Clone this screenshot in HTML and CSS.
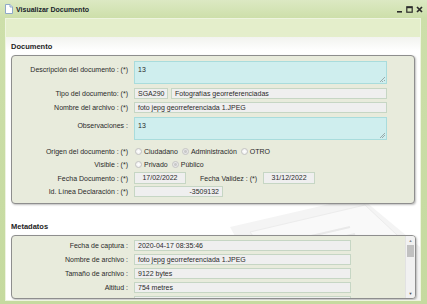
FILE: index.html
```html
<!DOCTYPE html>
<html lang="es">
<head>
    <meta charset="UTF-8">
    <meta name="viewport" content="width=device-width, initial-scale=1.0">
    <title>Visualizar Documento</title>

    <link rel="stylesheet" href="styles.css">
</head>
<body>

    <div class="window">
        <!-- Title bar -->
        <div class="titlebar">
            <svg class="doc-icon" width="8" height="10" viewBox="0 0 8 10">
                <path d="M0.5 0.5 H5 L7.5 3 V9.5 H0.5 Z" fill="#fff" stroke="#8fa9c8"/>
                <path d="M5 0.5 V3 H7.5" fill="#dfe8f3" stroke="#8fa9c8"/>
            </svg>
            <span class="title">Visualizar Documento</span>
            <div class="tools">
                <svg width="7" height="7" viewBox="0 0 7 7"><rect x="1" y="5" width="5" height="1.6" fill="#2b2b2b"/></svg>
                <svg width="7" height="7" viewBox="0 0 7 7"><rect x="0.8" y="0.8" width="5.4" height="5.4" fill="none" stroke="#2b2b2b" stroke-width="1.2"/><rect x="0.8" y="0.8" width="5.4" height="1.4" fill="#2b2b2b"/></svg>
                <svg width="7" height="7" viewBox="0 0 7 7"><path d="M1 1 L6 6 M6 1 L1 6" stroke="#2b2b2b" stroke-width="1.7"/></svg>
            </div>
        </div>

        <div class="frame">
            <div class="toolbar"></div>

            <div class="content">
                <!-- faint background picture -->
                <svg class="watermark" width="230" height="130" viewBox="0 0 230 130">
                    <path d="M40 40 L170 10 L230 60 L230 130 L90 130 Z" fill="#f4f4f4"/>
                    <path d="M60 45 L175 18 L222 62 L110 112 Z" fill="#f9f9f9" stroke="#ececec"/>
                    <path d="M95 55 L160 40 M100 62 L165 47 M105 69 L170 54 M110 76 L175 61" stroke="#e9e9e9" stroke-width="2"/>
                </svg>

                <h3 class="section-title">Documento</h3>
                <div class="fieldset doc">
                    <div class="row">
                        <label class="label top">Descripción del documento : (*)</label>
                        <div class="textarea">13<span class="grip"></span></div>
                    </div>
                    <div class="row gap-4">
                        <label class="label">Tipo del documento: (*)</label>
                        <div class="input code">SGA290</div>
                        <div class="input type-name">Fotografías georreferenciadas</div>
                    </div>
                    <div class="row gap-3">
                        <label class="label">Nombre del archivo : (*)</label>
                        <div class="input wide">foto jepg georreferenciada 1.JPEG</div>
                    </div>
                    <div class="row gap-4">
                        <label class="label top">Observaciones :</label>
                        <div class="textarea">13<span class="grip"></span></div>
                    </div>
                    <div class="row gap-6">
                        <label class="label">Origen del documento : (*)</label>
                        <span class="radio"></span><span class="radio-text">Ciudadano</span>
                        <span class="radio checked"></span><span class="radio-text">Administración</span>
                        <span class="radio"></span><span class="radio-text">OTRO</span>
                    </div>
                    <div class="row gap-2">
                        <label class="label">Visible : (*)</label>
                        <span class="radio"></span><span class="radio-text">Privado</span>
                        <span class="radio checked"></span><span class="radio-text">Público</span>
                    </div>
                    <div class="row gap-2">
                        <label class="label">Fecha Documento : (*)</label>
                        <div class="input date">17/02/2022</div>
                        <label class="label inline">Fecha Validez : (*)</label>
                        <div class="input date">31/12/2022</div>
                    </div>
                    <div class="row gap-2">
                        <label class="label">Id. Línea Declaración : (*)</label>
                        <div class="input line-id">-3509132</div>
                    </div>
                </div>

                <h3 class="section-title meta-title">Metadatos</h3>
                <div class="fieldset meta">
                    <div class="meta-rows">
                        <div class="row">
                            <label class="label">Fecha de captura :</label>
                            <div class="input meta-value">2020-04-17 08:35:46</div>
                        </div>
                        <div class="row">
                            <label class="label">Nombre de archivo :</label>
                            <div class="input meta-value">foto jepg georreferenciada 1.JPEG</div>
                        </div>
                        <div class="row">
                            <label class="label">Tamaño de archivo :</label>
                            <div class="input meta-value">9122 bytes</div>
                        </div>
                        <div class="row">
                            <label class="label">Altitud :</label>
                            <div class="input meta-value">754 metres</div>
                        </div>
                        <div class="row">
                            <label class="label"></label>
                            <div class="input meta-value"></div>
                        </div>
                    </div>
                    <div class="scrollbar">
                        <span class="arrow">&#9650;</span>
                        <span class="thumb"></span>
                        <span class="arrow down">&#9660;</span>
                    </div>
                </div>
            </div>
        </div>
    </div>

</body>
</html>
```

FILE: styles.css
```css
* {
    margin: 0;
    padding: 0;
    box-sizing: border-box;
    font-family: 'Liberation Sans', Arial, sans-serif;
}
body {
    width: 427px;
    height: 304px;
    overflow: hidden;
    background: #c6da9f;
}
.window {
    height: 304px;
    display: flex;
    flex-direction: column;
    background: linear-gradient(#dce9c3, #cddfaa 18px, #c5da9f);
}
.titlebar {
    height: 18px;
    display: flex;
    align-items: center;
    padding: 0 4px 0 5px;
}
.title {
    margin-left: 3px;
    font-size: 7px;
    font-weight: bold;
    color: #17232c;
}
.tools {
    margin-left: auto;
    display: flex;
    gap: 3px;
}
.frame {
    flex: 1;
    margin: 0 6px 3px 5px;
    border: 1px solid #eef4df;
    display: flex;
    flex-direction: column;
    background: #fff;
    overflow: hidden;
}
.toolbar {
    height: 18px;
    background: #e4eecb;
}
.content {
    flex: 1;
    position: relative;
    padding: 5px 4px 0 5px;
    background: linear-gradient(#f2f3ef, #fff 14px);
}
.watermark {
    position: absolute;
    right: 0;
    top: 150px;
}
.section-title {
    position: relative;
    height: 9px;
    margin-bottom: 4px;
    font-size: 7.5px;
    line-height: 9px;
    font-weight: bold;
    color: #1d1d1d;
}
.meta-title {
    margin-top: 18px;
}
.fieldset {
    position: relative;
    background: #e8ebdc;
    border: 1px solid #8e8e8e;
    border-radius: 4px;
    box-shadow: 1px 1px 2px rgba(0, 0, 0, 0.25);
}
.doc {
    margin-right: 1px;
    padding: 5px 0 6px 0;
}
.row {
    display: flex;
    align-items: center;
    font-size: 7px;
    line-height: 11px;
    color: #2a2a2a;
}
.gap-2 { margin-top: 2px; }
.gap-3 { margin-top: 3px; }
.gap-4 { margin-top: 4px; }
.gap-6 { margin-top: 6px; }
.label {
    width: 116px;
    margin-right: 6px;
    text-align: right;
    white-space: nowrap;
}
.label.top {
    align-self: flex-start;
    padding-top: 3px;
}
.label.inline {
    width: auto;
    margin: 0 6px 0 14px;
}
.textarea {
    position: relative;
    width: 253px;
    height: 23px;
    padding: 2px 3px;
    background: #cfeeee;
    border: 1px solid #a9dcdc;
}
.grip {
    position: absolute;
    right: 1px;
    bottom: 1px;
    width: 5px;
    height: 5px;
    background: linear-gradient(135deg, transparent 45%, #9aa 45%, #9aa 55%, transparent 55%, transparent 70%, #9aa 70%, #9aa 80%, transparent 80%);
}
.input {
    height: 11px;
    padding: 0 3px;
    background: #efefef;
    border: 1px solid #c6d6c4;
    white-space: nowrap;
    overflow: hidden;
    line-height: 9px;
}
.code {
    width: 34px;
    text-align: right;
    margin-right: 3px;
}
.type-name {
    width: 216px;
}
.wide {
    width: 253px;
}
.date {
    width: 52px;
    height: 12px;
    line-height: 10px;
    text-align: center;
}
.line-id {
    width: 89px;
    text-align: right;
}
.radio {
    width: 7px;
    height: 7px;
    margin: 0 2px 0 1px;
    border: 1px solid #c4c4c4;
    border-radius: 50%;
    background: radial-gradient(#ffffff, #eaeaea);
}
.radio.checked {
    background: radial-gradient(#c9c9c9 35%, #e4e4e4 45%, #f0f0f0);
}
.radio-text {
    margin-right: 3px;
}
.meta {
    display: flex;
    height: 64px;
    overflow: hidden;
}
.meta-rows {
    padding-top: 4px;
}
.meta-rows .row + .row {
    margin-top: 3px;
}
.meta-value {
    width: 217px;
}
.scrollbar {
    margin-left: auto;
    width: 10px;
    display: flex;
    flex-direction: column;
    align-items: center;
    background: #f1f1f1;
    border-left: 1px solid #e2e2e2;
}
.arrow {
    font-size: 4px;
    line-height: 9px;
    color: #8a8a8a;
}
.arrow.down {
    margin-top: auto;
    color: #505050;
}
.thumb {
    width: 7px;
    height: 12px;
    background: #c1c1c1;
}
```
